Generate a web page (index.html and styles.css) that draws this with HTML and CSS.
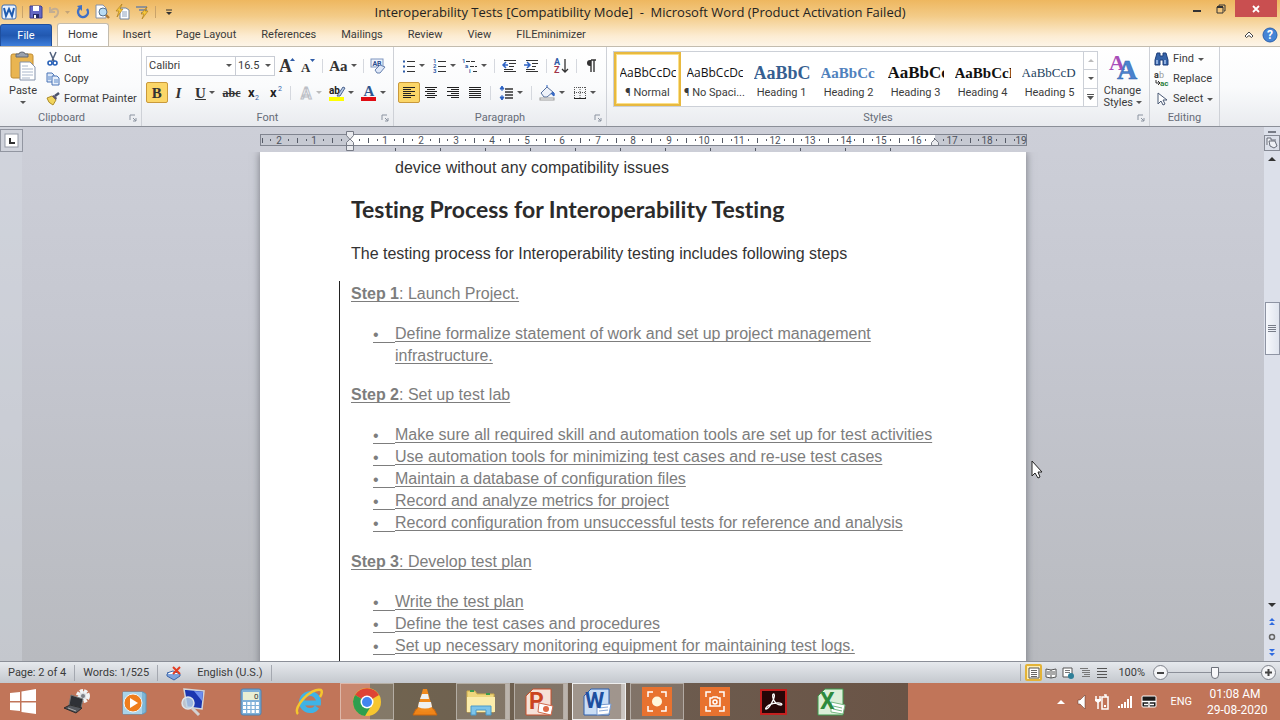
FILE: index.html
```html
<!DOCTYPE html>
<html lang="en">
<head>
<meta charset="utf-8">
<title>Interoperability Tests - Microsoft Word</title>
<link rel="stylesheet" href="styles.css">
</head>
<body>

<header class="titlebar">
  <div class="quick">
    <svg width="16" height="16" viewBox="0 0 16 16"><rect x="1" y="1" width="14" height="14" rx="2" fill="#eaf2fc" stroke="#3a6db5"/><path d="M3 4l2 8 3-7 3 7 2-8" fill="none" stroke="#1f5cb0" stroke-width="2"/></svg>
    <i class="qsep"></i>
    <button class="qb" title="Save"><svg width="14" height="14" viewBox="0 0 14 14"><path d="M1 1h11l1 1v11H1z" fill="#6468c4" stroke="#3c3f94"/><rect x="4" y="1" width="6" height="5" fill="#fff"/><rect x="4" y="9" width="6" height="4" fill="#252a66"/><rect x="5" y="10" width="2" height="3" fill="#fff"/></svg></button>
    <button class="qb" title="Undo"><svg width="22" height="14" viewBox="0 0 22 14"><path d="M2 2v5h5M2 7c3-5 9-4 8 1-.5 2-2 4-4 4" fill="none" stroke="#c3ad92" stroke-width="2"/><path d="M17 6h5l-2.500 3z" fill="#c3a377"/></svg></button>
    <button class="qb" title="Repeat"><svg width="14" height="14" viewBox="0 0 14 14"><path d="M4 3a5 5 0 1 0 7 1" fill="none" stroke="#3e6fc6" stroke-width="2.4"/><path d="M6 0v6L1 1z" fill="#3e6fc6"/></svg></button>
    <button class="qb" title="Print Preview"><svg width="15" height="16" viewBox="0 0 15 16"><path d="M1 1h7l3 3v10H1z" fill="#fff" stroke="#8492ab"/><circle cx="8" cy="8" r="4" fill="#b9dcf3" stroke="#54718f"/><path d="M11 11l3 3" stroke="#b07b34" stroke-width="2.4"/></svg></button>
    <button class="qb" title="Quick Print"><svg width="15" height="16" viewBox="0 0 15 16"><path d="M5 4h6l3 2v9H5z" fill="#fff" stroke="#71839e"/><path d="M7 8h5M7 10h5M7 12h5" stroke="#8ca0be"/><path d="M7 0L1 7h3l-2 6 6-8H5z" fill="#f6c63b" stroke="#a67513" stroke-width=".6"/></svg></button>
    <button class="qb" title="Options"><svg width="15" height="14" viewBox="0 0 15 14"><path d="M1 2h11M4 5h8M6 8h5" stroke="#71839e" stroke-width="1.6"/><path d="M12 2L6 9h3l-2 5 6-8h-3z" fill="#f6c63b" stroke="#a67513" stroke-width=".6"/></svg></button>
    <i class="qsep"></i>
    <button class="qb" title="Customize"><svg width="8" height="7" viewBox="0 0 8 7"><path d="M1 1h6" stroke="#333"/><path d="M1 3h6L4 6z" fill="#333"/></svg></button>
  </div>
  <h1 class="title">Interoperability Tests [Compatibility Mode] &nbsp;- &nbsp;Microsoft Word (Product Activation Failed)</h1>
  <div class="winbuttons">
    <button title="Minimize"><svg width="10" height="10" viewBox="0 0 10 10"><path d="M1 7h8" stroke="#333" stroke-width="2"/></svg></button>
    <button title="Restore"><svg width="10" height="10" viewBox="0 0 10 10"><path d="M3 2V1h6v6H8M1 3h6v6H1z" fill="none" stroke="#333"/><path d="M1 3h6" stroke="#333" stroke-width="2"/></svg></button>
    <button class="close" title="Close"><svg width="8" height="8" viewBox="0 0 8 8"><path d="M1 1l6 6M7 1L1 7" stroke="#fff" stroke-width="1.8"/></svg></button>
  </div>
</header>

<nav class="tabs">
  <button class="file">File</button>
  <button class="tab on">Home</button>
  <button class="tab">Insert</button>
  <button class="tab">Page Layout</button>
  <button class="tab">References</button>
  <button class="tab">Mailings</button>
  <button class="tab">Review</button>
  <button class="tab">View</button>
  <button class="tab">FILEminimizer</button>
  <span class="fill"></span>
  <button class="tool" title="Minimize the Ribbon"><svg width="10" height="8" viewBox="0 0 10 8"><path d="M1 5l4-4 4 4-1.500 1.500L5 4.500 2.500 6.500z" fill="#fff" stroke="#444"/></svg></button>
  <button class="tool" title="Help"><svg width="16" height="16" viewBox="0 0 16 16"><circle cx="8" cy="8" r="7" fill="#4584d6" stroke="#2c61ad"/><text x="8" y="12" text-anchor="middle" font-size="12" font-weight="bold" fill="#fff">?</text></svg></button>
</nav>

<section class="ribbon">
  <div class="group clipboard">
    <div class="body">
      <button class="big">
        <svg width="26" height="30" viewBox="0 0 26 30"><rect x="1" y="3" width="22" height="24" rx="2" fill="#e9b551" stroke="#c08c33"/><path d="M6 5V3h3q0-2 3-2t3 2h3v3H6z" fill="#9aa2ae" stroke="#626a76"/><path d="M10 11h10l5 5v13H10z" fill="#fff" stroke="#8492ab"/><path d="M12 15h6M12 18h11M12 21h11M12 24h11M12 27h8" stroke="#a9b6cb"/></svg>
        <span>Paste</span><i class="arrow"></i>
      </button>
      <div class="stack">
        <button><svg width="14" height="14" viewBox="0 0 14 14"><path d="M4 0l4 9M10 0L6 9" stroke="#50607c" stroke-width="1.500"/><circle cx="4" cy="11" r="2" fill="none" stroke="#2861b8" stroke-width="1.600"/><circle cx="9" cy="11" r="2" fill="none" stroke="#2861b8" stroke-width="1.600"/></svg>Cut</button>
        <button><svg width="14" height="14" viewBox="0 0 14 14"><path d="M1 1h5l2 2v7H1z" fill="#dbe7f8" stroke="#4a74b6"/><path d="M6 4h5l2 2v7H6z" fill="#e8f0fb" stroke="#4a74b6"/><path d="M8 8h4M8 10h4M2 5h3M2 7h3" stroke="#5f8ccb"/></svg>Copy</button>
        <button><svg width="14" height="14" viewBox="0 0 14 14"><path d="M1 6l5-2 4 4-3 5q-5-2-6-7z" fill="#f1d45c" stroke="#ad8d2c"/><path d="M6 4l2-1 3 3-1 2z" fill="#5c5570"/><path d="M9 4l4-3" stroke="#49536b" stroke-width="2.500"/></svg>Format Painter</button>
      </div>
    </div>
    <div class="caption">Clipboard<svg class="launch" width="8" height="8" viewBox="0 0 8 8"><path d="M1 6V1h5M4 4l3 3M7 4v3H4" fill="none" stroke="#8b93a0"/></svg></div>
  </div>

  <div class="group font">
    <div class="body rows">
      <div class="row">
        <label class="combo name"><select aria-label="Font"><option>Calibri</option></select><i class="arrow"></i></label>
        <label class="combo size"><select aria-label="Font size"><option>16.5</option></select><i class="arrow"></i></label>
        <button class="ib" title="Grow Font"><svg width="18" height="18" viewBox="0 0 18 18"><text class="glyph" x="2" y="15" font-size="18">A</text><path d="M13 4l2.500-3L18 4z" fill="#2f5ca8"/></svg></button>
        <button class="ib" title="Shrink Font"><svg width="16" height="18" viewBox="0 0 16 18"><text class="glyph" x="2" y="15" font-size="13">A</text><path d="M11 2h5l-2.500 3z" fill="#2f5ca8"/></svg></button>
        <i class="sep"></i>
        <button class="ib wide serif" title="Change Case"><span class="g14">Aa</span><i class="arrow"></i></button>
        <i class="sep"></i>
        <button class="ib" title="Clear Formatting"><svg width="16" height="16" viewBox="0 0 16 16"><rect x="1" y="1" width="12" height="8" fill="#eef3fb" stroke="#7f96bf"/><text x="7" y="8" font-size="7" font-weight="bold" text-anchor="middle" fill="#2b4f8f">AB</text><path d="M5 12l5-5 5 2-5 6H7z" fill="#dfe8f8" stroke="#6680ae"/></svg></button>
      </div>
      <div class="row">
        <button class="ib on serif" title="Bold"><span class="g14">B</span></button>
        <button class="ib serif ital" title="Italic"><span class="g14">I</span></button>
        <button class="ib wide serif" title="Underline"><u class="g14">U</u><i class="arrow"></i></button>
        <button class="ib serif" title="Strikethrough"><s class="g12">abc</s></button>
        <button class="ib" title="Subscript"><svg width="14" height="16" viewBox="0 0 14 16"><text x="2" y="12" font-size="13" font-weight="bold" fill="#222">x</text><text x="9" y="15" font-size="7" fill="#2f5ca8">2</text></svg></button>
        <button class="ib" title="Superscript"><svg width="14" height="16" viewBox="0 0 14 16"><text x="2" y="12" font-size="13" font-weight="bold" fill="#222">x</text><text x="10" y="6" font-size="7" fill="#2f5ca8">2</text></svg></button>
        <i class="sep"></i>
        <button class="ib wide" title="Text Effects"><svg width="14" height="16" viewBox="0 0 14 16"><text x="7" y="14" text-anchor="middle" font-size="16" font-weight="bold" fill="#f4f4f6" stroke="#bcbfc6">A</text></svg><i class="arrow pale"></i></button>
        <button class="ib wide" title="Highlight"><svg width="16" height="16" viewBox="0 0 16 16"><rect x="0" y="12" width="15" height="4" fill="#ff0"/><text x="0" y="9" font-size="10" font-weight="bold" fill="#222">ab</text><path d="M8 11l6-9 2 1-5 8z" fill="#b9cce8" stroke="#4d648e"/></svg><i class="arrow"></i></button>
        <button class="ib wide" title="Font Color"><svg width="16" height="16" viewBox="0 0 16 16"><rect x="0" y="12" width="15" height="4" fill="#e00b12"/><text class="glyph blue" x="8" y="11" text-anchor="middle" font-size="15">A</text></svg><i class="arrow"></i></button>
      </div>
    </div>
    <div class="caption">Font<svg class="launch" width="8" height="8" viewBox="0 0 8 8"><path d="M1 6V1h5M4 4l3 3M7 4v3H4" fill="none" stroke="#8b93a0"/></svg></div>
  </div>

  <div class="group para">
    <div class="body rows">
      <div class="row">
        <button class="ib wide" title="Bullets"><svg width="14" height="14" viewBox="0 0 14 14"><path d="M5 2.500h8M5 7.500h8M5 12.500h8" stroke="#333"/><path d="M1 2.500h2M1 7.500h2M1 12.500h2" stroke="#2f5ca8" stroke-width="2"/></svg><i class="arrow"></i></button>
        <button class="ib wide" title="Numbering"><svg width="14" height="14" viewBox="0 0 14 14"><path d="M5 2.500h8M5 7.500h8M5 12.500h8" stroke="#333"/><g font-size="6" font-weight="bold" fill="#2f5ca8"><text y="4">1</text><text y="9">2</text><text y="14">3</text></g></svg><i class="arrow"></i></button>
        <button class="ib wide" title="Multilevel List"><svg width="16" height="14" viewBox="0 0 16 14"><path d="M4 2.500h9M8 7.500h7M11 12.500h4" stroke="#333" stroke-dasharray="4 1"/><g font-size="6" font-weight="bold" fill="#2f5ca8"><text y="4">1</text><text x="3" y="9">a</text><text x="7" y="14">i</text></g></svg><i class="arrow"></i></button>
        <i class="sep"></i>
        <button class="ib" title="Decrease Indent"><svg width="15" height="14" viewBox="0 0 15 14"><path d="M2 1.500h12M7 4.500h7M7 7.500h5M2 10.500h9M2 12.500h12" stroke="#333"/><path d="M6 6H2M4 3L1 6l3 3" fill="none" stroke="#2c62c4" stroke-width="1.500"/></svg></button>
        <button class="ib" title="Increase Indent"><svg width="15" height="14" viewBox="0 0 15 14"><path d="M2 1.500h12M8 4.500h6M8 7.500h4M2 10.500h9M2 12.500h12" stroke="#333"/><path d="M0 6h5M3 3l3 3-3 3" fill="none" stroke="#2c62c4" stroke-width="1.500"/></svg></button>
        <i class="sep"></i>
        <button class="ib" title="Sort"><svg width="14" height="16" viewBox="0 0 14 16"><text x="0" y="7" font-size="9" font-weight="bold" fill="#2f5ca8">A</text><text x="0" y="15" font-size="9" font-weight="bold" fill="#a03348">Z</text><path d="M11 1v13M8 11l3 3 3-3" fill="none" stroke="#333" stroke-width="1.300"/></svg></button>
        <i class="sep"></i>
        <button class="ib" title="Show/Hide"><svg width="12" height="14" viewBox="0 0 12 14"><path d="M6 1h5M6 1v12M9 1v12" stroke="#333" stroke-width="1.400"/><path d="M6 1H5a3 3 0 0 0 0 6h1z" fill="#333"/></svg></button>
      </div>
      <div class="row">
        <button class="ib on" title="Align Left"><svg width="14" height="13" viewBox="0 0 14 13"><path d="M1 1.500h12M1 3.500h8M1 5.500h12M1 7.500h8M1 9.500h12M1 11.500h8" stroke="#222"/></svg></button>
        <button class="ib" title="Center"><svg width="14" height="13" viewBox="0 0 14 13"><path d="M1 1.500h12M3 3.500h8M1 5.500h12M3 7.500h8M1 9.500h12M3 11.500h8" stroke="#222"/></svg></button>
        <button class="ib" title="Align Right"><svg width="14" height="13" viewBox="0 0 14 13"><path d="M1 1.500h12M5 3.500h8M1 5.500h12M5 7.500h8M1 9.500h12M5 11.500h8" stroke="#222"/></svg></button>
        <button class="ib" title="Justify"><svg width="14" height="13" viewBox="0 0 14 13"><path d="M1 1.500h12M1 3.500h12M1 5.500h12M1 7.500h12M1 9.500h12M1 11.500h12" stroke="#222"/></svg></button>
        <i class="sep"></i>
        <button class="ib wide" title="Line Spacing"><svg width="15" height="16" viewBox="0 0 15 16"><path d="M6 4h8M6 7h8M6 10h8M6 13h8" stroke="#333" stroke-width="1.300"/><path d="M3 2v4M3 10v4M1 4l2-3 2 3zM1 12l2 3 2-3z" fill="#2c62c4" stroke="#2c62c4"/></svg><i class="arrow"></i></button>
        <i class="sep"></i>
        <button class="ib wide" title="Shading"><svg width="17" height="16" viewBox="0 0 17 16"><path d="M2 8l6-6 6 5-6 5H5z" fill="#eef2fa" stroke="#56709e"/><path d="M8 2V0M14 7q2 1 1 4-2-1-3-3" stroke="#2c62c4" fill="#3d6cc0"/><rect x="1" y="13" width="14" height="2" fill="#fff" stroke="#999"/></svg><i class="arrow"></i></button>
        <button class="ib wide" title="Borders"><svg width="14" height="14" viewBox="0 0 14 14"><path d="M1 1.500h12M1 6.500h12M1.500 1v11M7 1v11M12.500 1v11" stroke="#555" stroke-dasharray="1 1"/><path d="M1 12.500h12" stroke="#222"/></svg><i class="arrow"></i></button>
      </div>
    </div>
    <div class="caption">Paragraph<svg class="launch" width="8" height="8" viewBox="0 0 8 8"><path d="M1 6V1h5M4 4l3 3M7 4v3H4" fill="none" stroke="#8b93a0"/></svg></div>
  </div>

  <div class="group styles">
    <div class="body">
      <div class="gallery">
        <button class="style on"><span class="sample">AaBbCcDc</span><span>¶ Normal</span></button>
        <button class="style"><span class="sample">AaBbCcDc</span><span>¶ No Spaci...</span></button>
        <button class="style"><span class="sample h1">AaBbCc</span><span>Heading 1</span></button>
        <button class="style"><span class="sample h2">AaBbCc</span><span>Heading 2</span></button>
        <button class="style"><span class="sample h3">AaBbCc</span><span>Heading 3</span></button>
        <button class="style"><span class="sample h4">AaBbCcD</span><span>Heading 4</span></button>
        <button class="style"><span class="sample h5">AaBbCcD</span><span>Heading 5</span></button>
        <div class="scroller">
          <button title="Row up"><i class="arrow up pale"></i></button>
          <button title="Row down"><i class="arrow"></i></button>
          <button title="More"><svg width="7" height="6" viewBox="0 0 7 6"><path d="M0 .5h7" stroke="#555"/><path d="M0 2h7L3.500 6z" fill="#555"/></svg></button>
        </div>
      </div>
      <button class="big change">
        <svg width="28" height="28" viewBox="0 0 28 28" font-family="Liberation Serif" font-weight="bold"><text x="0" y="17" font-size="22" fill="#a84fb8">A</text><text x="8" y="26" font-size="28" fill="#4a83cf" stroke="#2f64ae" stroke-width=".5">A</text></svg>
        <span>Change</span><span>Styles <i class="arrow"></i></span>
      </button>
    </div>
    <div class="caption">Styles<svg class="launch" width="8" height="8" viewBox="0 0 8 8"><path d="M1 6V1h5M4 4l3 3M7 4v3H4" fill="none" stroke="#8b93a0"/></svg></div>
  </div>

  <div class="group editing">
    <div class="body">
      <div class="stack">
        <button><svg width="15" height="14" viewBox="0 0 15 14"><path d="M3 1h3v3h3V1h3l2 7v5H9V8H6v5H1V8z" fill="#3563a8" stroke="#1f3f7b"/><path d="M3 8v4M11 8v4" stroke="#a9c5ee" stroke-width="1.500"/></svg>Find <i class="arrow"></i></button>
        <button><svg width="15" height="14" viewBox="0 0 15 14"><text x="0" y="6" font-size="9" font-weight="bold" fill="#333">a</text><text x="5" y="6" font-size="9" fill="#999">b</text><path d="M2 8v3h3M4 9l2 2-2 2" fill="none" stroke="#333"/><text x="6" y="14" font-size="8" font-weight="bold" fill="#2b8040">ac</text></svg>Replace</button>
        <button><svg width="15" height="14" viewBox="0 0 15 14"><path d="M4 1v11l3-3 2 4 2-1-2-4h4z" fill="#fff" stroke="#4b5a75"/></svg>Select <i class="arrow"></i></button>
      </div>
    </div>
    <div class="caption">Editing</div>
  </div>
</section>

<main class="workspace">
  <div class="vruler">
    <button class="tabstop" title="Left Tab"><svg width="13" height="13" viewBox="0 0 13 13"><rect width="13" height="13" fill="#fff" stroke="#9499a5"/><path d="M5 4v5h5" fill="none" stroke="#333" stroke-width="2"/></svg></button>
  </div>
  <div class="canvas">
    <svg class="ruler" width="767" height="25" viewBox="0 0 767 25">
      <rect x=".5" y="7.500" width="766" height="11" fill="#c6c9d2" stroke="#80848f"/>
      <rect x="90" y="8" width="585" height="10" fill="#fff"/>
      <g stroke="#555a66" shape-rendering="crispEdges">
        <path d="M1.500 13h764" stroke-width="5" stroke-dasharray="1 34.4"/>
        <path d="M10.300 13h750" stroke-width="2" stroke-dasharray="1 16.7"/>
        <path d="M135 22.500h500" stroke-width="3" stroke-dasharray="1 44"/>
      </g>
      <g class="nums">
        <text x="19" y="17">2</text><text x="54" y="17">1</text>
        <text x="125" y="17">1</text><text x="161" y="17">2</text><text x="196" y="17">3</text><text x="232" y="17">4</text><text x="267" y="17">5</text><text x="302" y="17">6</text><text x="338" y="17">7</text><text x="373" y="17">8</text><text x="409" y="17">9</text><text x="444" y="17">10</text><text x="479" y="17">11</text><text x="515" y="17">12</text><text x="550" y="17">13</text><text x="586" y="17">14</text><text x="621" y="17">15</text><text x="656" y="17">16</text><text x="692" y="17">17</text><text x="727" y="17">18</text><text x="761" y="17">19</text>
      </g>
      <path d="M86.500 4.500h7v4l-3.500 4-3.500-4zM86.500 18.500v-3l3.500-3.500 3.500 3.500v3zM86.500 18.500h7v5h-7zM671.500 18.500v-3l3.500-3.500 3.500 3.500v3z" fill="#e9eaee" stroke="#777b86"/>
    </svg>
    <article class="page">
      <p class="cont">device without any compatibility issues</p>
      <h2>Testing Process for Interoperability Testing</h2>
      <p>The testing process for Interoperability testing includes following steps</p>
      <div class="tracked">
        <p><ins><b>Step 1</b>: Launch Project.</ins></p>
        <ul>
          <li><ins>Define formalize statement of work and set up project management<br>infrastructure.</ins></li>
        </ul>
        <p><ins><b>Step 2</b>: Set up test lab</ins></p>
        <ul>
          <li><ins>Make sure all required skill and automation tools are set up for test activities</ins></li>
          <li><ins>Use automation tools for minimizing test cases and re-use test cases</ins></li>
          <li><ins>Maintain a database of configuration files</ins></li>
          <li><ins>Record and analyze metrics for project</ins></li>
          <li><ins>Record configuration from unsuccessful tests for reference and analysis</ins></li>
        </ul>
        <p><ins><b>Step 3</b>: Develop test plan</ins></p>
        <ul>
          <li><ins>Write the test plan</ins></li>
          <li><ins>Define the test cases and procedures</ins></li>
          <li><ins>Set up necessary monitoring equipment for maintaining test logs.</ins></li>
        </ul>
      </div>
    </article>
  </div>
  <div class="scrollbar">
    <i class="split"></i>
    <button class="rulertoggle" title="View Ruler"><svg width="12" height="12" viewBox="0 0 12 12"><path d="M1 8V1h4v2h5M3 4h6l2 5-3 2-4-2z" fill="#eef0f5" stroke="#666b77"/></svg></button>
    <button title="Up"><i class="arrow up big-arrow"></i></button>
    <span class="before"></span>
    <span class="thumb"></span>
    <span class="after"></span>
    <button title="Down"><i class="arrow big-arrow"></i></button>
    <button title="Previous Page"><svg width="8" height="8" viewBox="0 0 8 8"><path d="M1 4l3-3 3 3zM1 8l3-3 3 3z" fill="#2f6be0"/></svg></button>
    <button title="Select Browse Object"><svg width="8" height="8" viewBox="0 0 8 8"><circle cx="4" cy="4" r="2.500" fill="none" stroke="#666" stroke-width="1.500"/></svg></button>
    <button title="Next Page"><svg width="8" height="8" viewBox="0 0 8 8"><path d="M1 0l3 3 3-3zM1 4l3 3 3-3z" fill="#2f6be0"/></svg></button>
  </div>
</main>

<footer class="status">
  <button>Page: 2 of 4</button>
  <button>Words: 1/525</button>
  <button class="lang"><svg width="16" height="14" viewBox="0 0 16 14"><path d="M1 7l6-2 7 3-6 5z" fill="#fff" stroke="#3a64a8"/><path d="M1 8v2l7 4 6-4V8" fill="#7ea3dc" stroke="#3a64a8"/><path d="M7 1l7 7M14 1L7 8" stroke="#e33d22" stroke-width="2"/></svg>English (U.S.)</button>
  <span class="fill"></span>
  <div class="views">
    <button class="on" title="Print Layout"><svg width="12" height="12" viewBox="0 0 12 12"><path d="M1 1h10v10H1z" fill="#fff" stroke="#555"/><path d="M3 3.500h6M3 5.500h6M3 7.500h6M3 9.500h6" stroke="#666"/></svg></button>
    <button title="Full Screen Reading"><svg width="12" height="12" viewBox="0 0 12 12"><path d="M1 2l5 1 5-1v8l-5 1-5-1zM6 3v8M2 5h3M2 7h3M7 5h3M7 7h3" fill="#fff" stroke="#555"/></svg></button>
    <button title="Web Layout"><svg width="12" height="12" viewBox="0 0 12 12"><path d="M1 1h9v9H1z" fill="#fff" stroke="#555"/><path d="M3 3.500h5M3 5.500h5" stroke="#777"/><circle cx="9" cy="9" r="3" fill="#2e7f98"/></svg></button>
    <button title="Outline"><svg width="12" height="12" viewBox="0 0 12 12"><path d="M1 1.500h8M3 3.500h8M3 5.500h8M5 7.500h6M3 9.500h8" stroke="#777"/></svg></button>
    <button title="Draft"><svg width="12" height="12" viewBox="0 0 12 12"><path d="M1 1.500h10M1 4.500h10M1 7.500h10M1 10.500h10" stroke="#555"/></svg></button>
  </div>
  <button class="pct">100%</button>
  <button class="round" title="Zoom Out"><svg width="7" height="8" viewBox="0 0 7 8"><path d="M0 4h7" stroke="#444" stroke-width="2"/></svg></button>
  <input class="zoom" type="range" min="0" max="100" value="50" aria-label="Zoom">
  <button class="round" title="Zoom In"><svg width="7" height="7" viewBox="0 0 7 7"><path d="M0 3.500h7M3.500 0v7" stroke="#444" stroke-width="2"/></svg></button>
</footer>

<footer class="taskbar">
  <button class="start" title="Start"><svg width="26" height="25" viewBox="0 0 26 25"><path d="M0 4l10-1v9H0zM11.500 2.500L26 0v12H11.500zM0 13.500h10V22L0 21zM11.500 13.500H26V25l-14.500-2z" fill="#fff"/></svg></button>
  <button class="app" title="Device"><svg width="28" height="28" viewBox="0 0 28 28"><circle cx="20" cy="8" r="5" fill="#d6d9dd" stroke="#f2f3f4" stroke-width="4" stroke-dasharray="3 1"/><circle cx="20" cy="8" r="2" fill="#7c8086"/><path d="M8 7l12 4-2 9-12-3z" fill="#2f3136" stroke="#777"/><path d="M1 20l6-3 12 3-6 5z" fill="#55585e" stroke="#2a2a2a"/><path d="M5 20l8 3" stroke="#aaa"/></svg></button>
  <button class="app" title="Media Player"><svg width="28" height="28" viewBox="0 0 28 28"><path d="M2 4h20l3 2v18l-3 2H2z" fill="#7fb6d6" stroke="#5c98bd"/><path d="M2 4h19v22H2z" fill="#a8d3ea"/><circle cx="12" cy="15" r="9" fill="#ef7d1c" stroke="#f5f5f5"/><path d="M9 10v10l8-5z" fill="#fff"/></svg></button>
  <button class="app" title="Display"><svg width="28" height="28" viewBox="0 0 28 28"><path d="M5 1l20 2-2 18-15-2z" fill="#1c36b0" stroke="#d3d6da" stroke-width="1.500"/><path d="M15 3l9 1-1 9z" fill="#6d8df0"/><circle cx="9" cy="15" r="6" fill="#bed7e8" fill-opacity=".8" stroke="#dfe5ea" stroke-width="1.500"/><path d="M13 20l7 7" stroke="#d2d2d2" stroke-width="3"/></svg></button>
  <button class="app" title="Calculator"><svg width="24" height="28" viewBox="0 0 24 28"><rect x="2" y="1" width="20" height="26" rx="2" fill="#7fb0d8" stroke="#4d83b3"/><rect x="4" y="4" width="16" height="8" fill="#e9eed3"/><text x="15" y="11" font-size="8" fill="#333">0</text><path d="M4 15.500h16M4 19.500h16M4 23.500h16" stroke="#fff" stroke-width="3" stroke-dasharray="3 1.300"/></svg></button>
  <button class="app" title="Internet Explorer"><svg width="30" height="28" viewBox="0 0 30 28"><path d="M23 19a8.500 8.500 0 1 1 1.500-4H9" fill="none" stroke="#3fb3e6" stroke-width="5"/><path d="M4 26C-2 20 17-1 27 2q2 2-1 7" fill="none" stroke="#f5c62d" stroke-width="2.500"/></svg></button>
  <button class="app open" title="Chrome"><svg width="28" height="28" viewBox="0 0 28 28"><circle cx="14" cy="14" r="14" fill="#f6c62f"/><path d="M14 14L2 7a14 14 0 0 1 24 0z" fill="#de4334"/><path d="M14 14L2 7a14 14 0 0 0 10 21l6-10z" fill="#2f9e4f"/><circle cx="14" cy="14" r="6.500" fill="#fff"/><circle cx="14" cy="14" r="5" fill="#4285f0"/></svg></button>
  <button class="app" title="VLC"><svg width="26" height="28" viewBox="0 0 26 28"><path d="M4 21h18l3 6H1z" fill="#ef8418" stroke="#c9660e"/><path d="M11 1h4l6 21q-8 4-16 0z" fill="#f08a1e"/><path d="M10 6h6l1 5H8zM7 14h12l1 5q-7 3-14 0z" fill="#eef0f2"/></svg></button>
  <button class="app open multi" title="File Explorer"><svg width="30" height="28" viewBox="0 0 30 28"><path d="M1 3h8l2 3h17v18H1z" fill="#efd67c" stroke="#cfae4d"/><path d="M4 3h4M20 6h4" stroke="#3c9a4e" stroke-width="2"/><path d="M1 9h28v15H1z" fill="#fbecab"/><path d="M5 27V18h20v9h-5v-5H10v5z" fill="#7cc4ea" stroke="#4a9ac9"/></svg></button>
  <button class="app open multi" title="PowerPoint"><svg width="28" height="28" viewBox="0 0 28 28"><path d="M8 1h18v26H1V8z" fill="#f6e1d8" stroke="#c8502c"/><path d="M14 15l14 3-2 9-13-3z" fill="#fff" stroke="#d0694b"/><circle cx="21" cy="21" r="3" fill="#df6b48"/><text x="4" y="21" font-size="23" font-weight="bold" fill="#cb4420">P</text></svg></button>
  <button class="app open multi current" title="Word"><svg width="28" height="28" viewBox="0 0 28 28"><path d="M8 1h18v26H1V8z" fill="#c9ddf5" stroke="#2d5fae"/><path d="M14 17l14-1-2 10-12 1z" fill="#fff" stroke="#7a9cd0"/><path d="M16 20l9-1M16 23l9-1" stroke="#8aa9d8"/><text x="2" y="20" font-size="22" font-weight="bold" fill="#1d4f9f">W</text></svg></button>
  <button class="app open" title="Recorder"><svg width="30" height="29" viewBox="0 0 30 29"><rect width="30" height="29" fill="#e8722f"/><path d="M6 10V5h5M19 5h5v5M24 19v5h-5M11 24H6v-5" fill="none" stroke="#fff" stroke-width="1.500"/><circle cx="15" cy="14.500" r="5" fill="#fff6dc"/></svg></button>
  <button class="app" title="Screenshot"><svg width="30" height="29" viewBox="0 0 30 29"><rect width="30" height="29" fill="#e8722f"/><path d="M6 10V5h5M19 5h5v5M24 19v5h-5M11 24H6v-5M10 11h2l1-1h4l1 1h2v8H10z" fill="none" stroke="#fff" stroke-width="1.500"/><circle cx="15" cy="15" r="2" fill="none" stroke="#fff" stroke-width="1.500"/></svg></button>
  <button class="app" title="Acrobat"><svg width="27" height="26" viewBox="0 0 27 26"><rect x="1" y="1" width="25" height="24" fill="#260607" stroke="#c5201f" stroke-width="2"/><path d="M6 20c3 0 10-12 8-15-3-1-1 11 7 11 3-1-2-4-12 0-3 2-4 4-3 4z" fill="none" stroke="#fff" stroke-width="1.300"/></svg></button>
  <button class="app" title="Excel"><svg width="28" height="28" viewBox="0 0 28 28"><path d="M8 1h18v26H1V8z" fill="#dcefd9" stroke="#3d9a4d"/><path d="M14 14l14 3-2 9-12-2z" fill="#fff" stroke="#76b881"/><path d="M16 18l9 2M16 21l9 2" stroke="#76b881"/><text x="3" y="21" font-size="23" font-weight="bold" fill="#2c8a3e">X</text></svg></button>
  <span class="fill"></span>
  <div class="tray">
    <svg width="8" height="5" viewBox="0 0 8 5"><path d="M0 5l4-4 4 4z" fill="#fff"/></svg>
    <svg width="12" height="14" viewBox="0 0 12 14"><path d="M4 5h2l5-5v14L6 9H4z" fill="#fff" stroke="#5a3628" stroke-width=".5"/></svg>
    <svg width="14" height="16" viewBox="0 0 14 16"><path d="M7 3h6v12H7zM9 1h2v2" fill="none" stroke="#fff" stroke-width="1.500"/><path d="M9 11h2v2H9z" fill="#fff"/><path d="M1 2v4M5 2v4M3 7v8" stroke="#fff" stroke-width="1.500"/><path d="M0 5h6v2L3 9 0 7z" fill="#fff"/></svg>
    <svg width="14" height="13" viewBox="0 0 14 13"><path d="M1 11v2M4 9v4M7 7v6M10 4v9M13 1v12" stroke="#fff" stroke-width="2"/></svg>
    <svg width="16" height="13" viewBox="0 0 16 13"><rect x="1" y="1" width="14" height="11" rx="1" fill="#1a1a1a" stroke="#fff"/><path d="M1 6.500h14M8 7v5M3 9.500h4M9 9.500h4" stroke="#fff" stroke-width="1.500"/></svg>
    <span class="eng">ENG</span>
    <time>01:08 AM<br>29-08-2020</time>
  </div>
</footer>

<svg class="cursor" width="12" height="19" viewBox="0 0 12 19"><path d="M1 1v15l3-3 3 5 2-1-2-5h4z" fill="#fff" stroke="#222"/></svg>

</body>
</html>
```
FILE: styles.css
```css
*{
    box-sizing: border-box;
}
body{
    margin: 0;
    height: 100vh;
    display: flex;
    flex-direction: column;
    overflow: hidden;
    font: 11px/14px Roboto, "Open Sans", sans-serif;
    color: #3b3b3b;
    background: linear-gradient(#eeb75f, #f3cb87 16px, #fcecd2 36px, #fdf5e8 46px);
}
button, select{
    font: inherit;
    color: inherit;
    background: none;
    border: 0;
    padding: 0;
    margin: 0;
}
button{
    display: flex;
    align-items: center;
    justify-content: center;
    white-space: nowrap;
}
svg{
    display: block;
    flex: none;
    overflow: visible;
}
p, ul, h1, h2{
    margin: 0;
    padding: 0;
}
.fill{
    flex: 1;
}
.arrow{
    display: inline-block;
    flex: none;
    border: 3px solid transparent;
    border-top-color: #555;
    border-bottom: 0;
}
.arrow.up{
    border-top: 0;
    border-bottom: 3px solid #555;
}
.arrow.pale{
    border-top-color: #bbb;
    border-bottom-color: #bbb;
}
.arrow.big-arrow{
    border-width: 4px;
    border-top-color: #333;
    border-bottom: 0;
}
.arrow.up.big-arrow{
    border-top: 0;
    border-bottom: 4px solid #333;
}

/* title bar */
.titlebar{
    display: grid;
    grid-template-columns: 1fr auto 1fr;
    height: 23px;
    flex: none;
}
.quick{
    display: flex;
    align-items: center;
    gap: 5px;
    padding-left: 1px;
}
.qb{
    min-width: 15px;
}
.qsep{
    width: 1px;
    height: 12px;
    background: #c9a36a;
}
.title{
    font: 13px/24px "Open Sans", sans-serif;
    color: #222;
    white-space: nowrap;
}
.winbuttons{
    display: flex;
    justify-content: flex-end;
    padding-right: 3px;
}
.winbuttons button{
    width: 24px;
    height: 17px;
}
.winbuttons .close{
    width: 42px;
    margin-left: 2px;
    background: #c94f50;
}

/* ribbon tabs */
.tabs{
    display: flex;
    align-items: flex-end;
    height: 23px;
    flex: none;
}
.file{
    width: 52px;
    height: 22px;
    margin-right: 4px;
    border: 1px solid #1f4f9e;
    border-bottom: 0;
    border-radius: 3px 3px 0 0;
    background: linear-gradient(#2f6ccb, #2158b0 50%, #3f7fdc);
    color: #fff;
}
.tab{
    height: 23px;
    padding: 0 12px 0 13px;
}
.tab.on{
    padding: 0 10px;
    margin: 0 1px;
    border: 1px solid #c3bcae;
    border-bottom: 0;
    border-radius: 3px 3px 0 0;
    background: #fff;
}
.tool{
    height: 22px;
    width: 21px;
}

/* ribbon */
.ribbon{
    display: flex;
    flex: none;
    height: 81px;
    border-top: 1px solid #c3bcae;
    border-bottom: 1px solid #8b8f98;
    background: linear-gradient(#fff, #fafbfc 50%, #e9ebef);
}
.group{
    display: flex;
    flex-direction: column;
    flex: none;
    border-right: 1px solid #ced1d7;
}
.body{
    display: flex;
    flex: 1;
    padding: 0 4px;
}
.caption{
    position: relative;
    height: 17px;
    line-height: 18px;
    text-align: center;
    color: #666c78;
}
.launch{
    position: absolute;
    right: 4px;
    top: 5px;
}
.clipboard{
    width: 142px;
}
.clipboard .caption{
    padding-right: 18px;
}
.big{
    flex-direction: column;
    justify-content: flex-start;
    width: 38px;
    padding-top: 4px;
    line-height: 12px;
}
.big svg{
    margin-bottom: 4px;
}
.clipboard .arrow{
    margin-top: 4px;
}
.stack{
    display: flex;
    flex-direction: column;
    align-items: flex-start;
    padding-top: 2px;
}
.stack button{
    height: 20px;
    gap: 4px;
}
.clipboard .stack{
    padding-left: 4px;
}
.font{
    width: 252px;
}
.para{
    width: 213px;
}
.rows{
    flex-direction: column;
    gap: 6px;
    padding-top: 8px;
}
.row{
    display: flex;
    align-items: center;
    height: 21px;
}
.combo{
    display: flex;
    align-items: center;
    height: 20px;
    border: 1px solid #c8ccd4;
    background: #fff;
    padding: 0 3px 0 2px;
}
.combo select{
    appearance: none;
    flex: 1;
    min-width: 0;
}
.combo.name{
    width: 92px;
}
.combo.size{
    width: 40px;
    border-left: 0;
}
.ib{
    width: 22px;
    height: 21px;
    border: 1px solid transparent;
    border-radius: 2px;
}
.ib.wide{
    width: 32px;
    gap: 3px;
}
.ib.on{
    border-color: #c9993b;
    background: #fbd668;
}
.serif, .glyph{
    font-family: "Liberation Serif", serif;
    font-weight: bold;
    color: #333;
    fill: #333;
}
.glyph.blue{
    fill: #2f568f;
}
.ital{
    font-style: italic;
}
.g14{
    font-size: 15px;
}
.g12{
    font-size: 12px;
}
.sep{
    width: 1px;
    height: 14px;
    margin: 0 4px;
    background: #d5d8de;
}

/* styles gallery */
.styles{
    width: 543px;
}
.styles .body{
    padding-left: 6px;
}
.gallery{
    display: flex;
    height: 56px;
    margin-top: 4px;
    border: 1px solid #ccd0d7;
    background: #fff;
}
.style{
    width: 67px;
    flex-direction: column;
    border: 2px solid transparent;
    padding-top: 5px;
}
.style.on{
    border-color: #e8b93f;
    box-shadow: inset 0 0 0 1px #fbe08a;
}
.sample{
    width: 56px;
    height: 22px;
    font: 12px/18px "Open Sans", sans-serif;
    overflow: hidden;
    text-align: left;
    color: #111;
}
.h1, .h2, .h3, .h4, .h5{
    font-family: "Liberation Serif", serif;
    font-weight: bold;
    font-size: 15px;
}
.h1{
    font-size: 18px;
    color: #365f91;
}
.h2{
    color: #4f81bd;
}
.h3{
    font-size: 17px;
}
.h5{
    font-size: 13px;
    font-weight: normal;
    color: #243f60;
}
.scroller{
    display: flex;
    flex-direction: column;
    width: 14px;
    border-left: 1px solid #ccd0d7;
}
.scroller button{
    flex: 1;
}
.scroller button + button{
    border-top: 1px solid #ccd0d7;
}
.change{
    width: 46px;
    margin-left: 2px;
    padding-top: 6px;
}
.change .arrow{
    margin-bottom: 2px;
}
.editing{
    width: 70px;
}

/* document area */
.workspace{
    flex: 1;
    min-height: 0;
    display: flex;
    background: linear-gradient(#cdcfd8, #c6c8d1 35%, #b8babf);
}
.vruler{
    width: 22px;
    background: rgba(214, 219, 228, .4);
}
.tabstop{
    width: 23px;
    height: 23px;
    margin-top: 2px;
    border: 1px solid #9296a1;
}
.canvas{
    flex: 1;
    display: flex;
    flex-direction: column;
    align-items: center;
    overflow: hidden;
}
.ruler{
    margin-left: 1px;
}
.nums{
    font-size: 10px;
    text-anchor: middle;
    fill: #4c515c;
}
.page{
    flex: 1;
    width: 766px;
    padding: 5px 90px 0 91px;
    background: #fff;
    box-shadow: 0 0 8px #75777e;
    font: 16px/22px "Liberation Sans", Arial, sans-serif;
    color: #333;
    white-space: nowrap;
    clip-path: inset(0 -12px);
}
.cont{
    padding-left: 44px;
}
.page h2{
    margin: 16px 0 20px;
    font: bold 23px/28px Lato, sans-serif;
    font-variant-ligatures: none;
    color: #2b2b2b;
}
.tracked{
    margin: 16px 0 0 -12px;
    padding: 2px 0 100px 11px;
    border-left: 1px solid #222;
    color: #7d7d7d;
}
.tracked ins{
    text-decoration: underline;
    text-decoration-skip-ink: none;
    text-decoration-thickness: 1px;
    text-underline-offset: 2px;
}
.tracked ul{
    margin: 18px 0 17px 22px;
    list-style: none;
}
.tracked li{
    display: grid;
    grid-template-columns: 22px auto;
    justify-content: start;
}
/* the underline runs on below the bullet */
.tracked li::before{
    content: "•";
    height: 19px;
    line-height: 24px;
    border-bottom: 1px solid #7d7d7d;
}

/* scroll bar */
.scrollbar{
    display: flex;
    flex-direction: column;
    align-items: center;
    width: 16px;
    background: #dce0ea;
}
.scrollbar button{
    width: 16px;
    height: 16px;
}
.split{
    width: 8px;
    height: 2px;
    margin: 4px 0 2px;
    background: #777b86;
}
.scrollbar .rulertoggle{
    height: 16px;
    border: 1px solid #868a95;
}
.before{
    flex: 135;
}
.after{
    flex: 243;
}
.thumb{
    width: 15px;
    height: 53px;
    border: 1px solid #8e94a3;
    background: repeating-linear-gradient(#777c88 0 1px, transparent 1px 2px) center / 8px 7px no-repeat, linear-gradient(90deg, #f6f8fc, #dfe4ee);
}

/* status bar */
.status{
    display: flex;
    align-items: center;
    flex: none;
    height: 22px;
    padding-right: 4px;
    border-top: 1px solid #8b8f98;
    background: linear-gradient(#e6e9ed, #c4c8ce);
}
.status > button{
    height: 16px;
    padding: 0 8px;
    border-right: 1px solid #a4a8b0;
}
.status > .lang{
    gap: 15px;
}
.views{
    display: flex;
    border-left: 1px solid #a4a8b0;
    padding-left: 4px;
}
.views button{
    width: 17px;
    height: 17px;
}
.views .on{
    border: 2px solid #e3b338;
    border-radius: 2px;
    background: #fdeeb4;
}
.status > .pct{
    border: 0;
}
.status > .round{
    width: 15px;
    height: 15px;
    padding: 0;
    border: 1px solid #7d818a;
    border-radius: 50%;
    background: #f4f5f7;
}
.zoom{
    appearance: none;
    width: 93px;
    height: 14px;
    margin: 0;
    background: linear-gradient(#8b8f98, #8b8f98) center / 100% 1px no-repeat;
}
.zoom::-webkit-slider-thumb{
    appearance: none;
    width: 8px;
    height: 12px;
    border: 1px solid #6d717a;
    border-radius: 0 0 4px 4px;
    background: #f8f8fa;
}

/* taskbar */
.taskbar{
    display: flex;
    flex: none;
    height: 37px;
    background: linear-gradient(90deg, #c17559 370px, #706450 370px, #6d5d50 620px, #6a5446 908px, #c17559 908px);
    color: #fff;
}
.start{
    width: 48px;
    padding-right: 2px;
}
.app{
    width: 54px;
    margin: 0 2px;
    border: 1px solid transparent;
}
.open{
    border-color: rgba(255, 255, 255, .4);
    background: rgba(255, 255, 255, .14);
}
.multi{
    box-shadow: inset -3px 0 0 rgba(255, 255, 255, .1), inset -4px 0 0 rgba(255, 255, 255, .4);
    padding-right: 4px;
}
.current{
    border-color: #eee;
    background: rgba(255, 255, 255, .35);
}
.tray{
    display: flex;
    align-items: center;
    gap: 9px;
    padding-right: 17px;
    font-size: 12px;
    white-space: nowrap;
}
.eng{
    margin-left: 4px;
    font-size: 11px;
}
time{
    width: 56px;
    margin-left: 6px;
    line-height: 16px;
    text-align: center;
}

.cursor{
    position: absolute;
    left: 1031px;
    top: 460px;
}
```
